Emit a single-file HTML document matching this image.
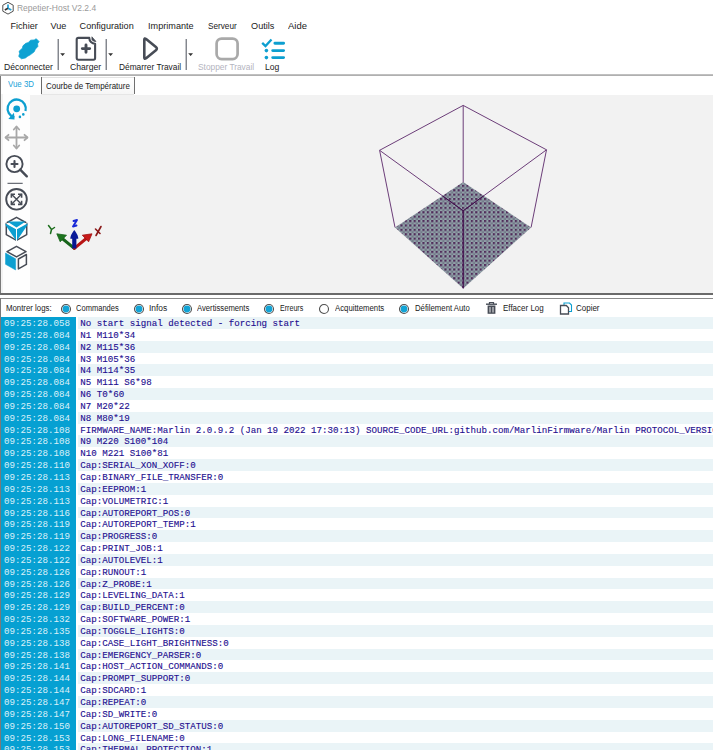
<!DOCTYPE html>
<html><head><meta charset="utf-8"><style>
html,body{margin:0;padding:0;}
body{width:713px;height:750px;overflow:hidden;position:relative;background:#fff;font-family:"Liberation Sans",sans-serif;}
.ab{position:absolute;}
.t{position:absolute;white-space:pre;line-height:12px;}
#log{position:absolute;left:1px;top:317px;width:712px;}
.r{position:relative;height:11.85px;white-space:pre;font-family:"Liberation Mono",monospace;font-size:9.16px;line-height:11.85px;}
.r b{position:absolute;left:0;top:0;width:75px;height:100%;background:#06a0d2;color:#dcf1f9;font-weight:normal;padding-left:3px;padding-top:1px;box-sizing:border-box;}
.r i{position:absolute;left:77px;top:0;right:0;height:100%;font-style:normal;color:#1e0f90;-webkit-text-stroke:0.12px #1e0f90;padding-left:2.3px;padding-top:1px;box-sizing:border-box;}
.r.a i{background:#eaf4f7;}
</style></head><body>
<svg class="ab" style="left:1px;top:1px" width="14" height="14" viewBox="0 0 14 14">
<polygon points="7,1.3 12.2,4.2 12.2,10.2 7,13.1 1.8,10.2 1.8,4.2" fill="none" stroke="#505050" stroke-width="1"/>
<path d="M7,7.2 L7,3.6" stroke="#2aa3d6" stroke-width="1.8"/>
<path d="M7,7.2 L10.3,9" stroke="#2aa3d6" stroke-width="1.8"/>
<path d="M7,7.2 L3.8,9" stroke="#333" stroke-width="1.6"/>
</svg><div class="t" style="left:17.00px;top:2.20px;font-size:9.8px;color:#9a9a9a;transform:scaleX(0.865);transform-origin:0 0;">Repetier-Host V2.2.4</div><div class="t" style="left:10.50px;top:19.95px;font-size:9.1px;color:#1a1a1a;">Fichier</div><div class="t" style="left:50.50px;top:19.95px;font-size:9.1px;color:#1a1a1a;">Vue</div><div class="t" style="left:79.60px;top:19.95px;font-size:9.1px;color:#1a1a1a;">Configuration</div><div class="t" style="left:148.10px;top:19.95px;font-size:9.1px;color:#1a1a1a;">Imprimante</div><div class="t" style="left:208.00px;top:19.95px;font-size:9.1px;color:#1a1a1a;transform:scaleX(0.9);transform-origin:0 0;">Serveur</div><div class="t" style="left:251.10px;top:19.95px;font-size:9.1px;color:#1a1a1a;">Outils</div><div class="t" style="left:287.70px;top:19.95px;font-size:9.1px;color:#1a1a1a;transform:scaleX(1.04);transform-origin:0 0;">Aide</div><div class="t" style="left:3.80px;top:60.52px;font-size:8.9px;color:#1a1a1a;transform:scaleX(0.97);transform-origin:0 0;">Déconnecter</div><div class="t" style="left:70.20px;top:60.52px;font-size:8.9px;color:#1a1a1a;transform:scaleX(0.97);transform-origin:0 0;">Charger</div><div class="t" style="left:118.70px;top:60.52px;font-size:8.9px;color:#1a1a1a;transform:scaleX(0.94);transform-origin:0 0;">Démarrer Travail</div><div class="t" style="left:198.30px;top:60.52px;font-size:8.9px;color:#b4b4c0;transform:scaleX(0.94);transform-origin:0 0;">Stopper Travail</div><div class="t" style="left:265.00px;top:60.52px;font-size:8.9px;color:#1a1a1a;transform:scaleX(0.97);transform-origin:0 0;">Log</div><div class="ab" style="left:57px;top:39px;width:2px;height:31px;background:linear-gradient(to right,#c4c6ca 50%,#84878e 50%)"></div><svg class="ab" style="left:60.0px;top:52.8px" width="6" height="4"><polygon points="0.2,0.2 5,0.2 2.6,3" fill="#333"/></svg><div class="ab" style="left:105px;top:39px;width:2px;height:31px;background:linear-gradient(to right,#c4c6ca 50%,#84878e 50%)"></div><svg class="ab" style="left:108.0px;top:52.8px" width="6" height="4"><polygon points="0.2,0.2 5,0.2 2.6,3" fill="#333"/></svg><div class="ab" style="left:185px;top:39px;width:2px;height:31px;background:linear-gradient(to right,#c4c6ca 50%,#84878e 50%)"></div><svg class="ab" style="left:188.0px;top:52.8px" width="6" height="4"><polygon points="0.2,0.2 5,0.2 2.6,3" fill="#333"/></svg><svg class="ab" style="left:17px;top:37px" width="24" height="23" viewBox="0 0 24 23">
<polygon points="19.24,1.74 21.98,4.47 20.52,6.84 20.88,9.39 18.33,12.13 17.23,14.68 13.59,17.60 10.31,19.42 8.48,20.88 4.47,21.79 1.74,19.42 2.65,16.51 2.10,14.32 5.56,11.04 5.93,8.85 8.85,6.29 11.04,5.75 13.59,3.19 17.23,3.01" fill="#0ea2d2" stroke="#0ea2d2" stroke-width="0.8" stroke-linejoin="round"/>
</svg><svg class="ab" style="left:74px;top:36px" width="24" height="26" viewBox="0 0 24 26">
<path d="M4.3,1.9 H15.3 A5.8,5.8 0 0 0 21.1,7.7 V22.1 Q21.1,23.7 19.5,23.7 H4.3 Q2.7,23.7 2.7,22.1 V3.5 Q2.7,1.9 4.3,1.9 Z" fill="none" stroke="#474c56" stroke-width="2.1" stroke-linejoin="round"/>
<path d="M17.9,0.8 V3.4 Q18.6,5.5 22,5.5 Z" fill="#474c56" stroke="#474c56" stroke-width="0.7" stroke-linejoin="round"/>
<path d="M12,8.9 V16.3 M8.3,12.6 H15.7" stroke="#474c56" stroke-width="2.9" stroke-linecap="round"/>
</svg><svg class="ab" style="left:141px;top:36px" width="20" height="26" viewBox="0 0 20 26">
<path d="M3.3,3.8 Q3.3,1.7 5.1,3 L14.9,10.9 Q16.8,12.6 14.9,14.3 L5.1,22.3 Q3.3,23.6 3.3,21.5 Z" fill="none" stroke="#474c56" stroke-width="2.6" stroke-linejoin="round"/>
</svg><svg class="ab" style="left:214px;top:36px" width="26" height="26" viewBox="0 0 26 26">
<rect x="2.6" y="2.6" width="21" height="20.5" rx="5" fill="none" stroke="#a9a9a9" stroke-width="2.7"/>
</svg><svg class="ab" style="left:260px;top:37px" width="27" height="23" viewBox="0 0 27 23">
<path d="M2.2,5.8 L5.5,9 L11.5,2.5" fill="none" stroke="#0d9fd0" stroke-width="2.3"/>
<path d="M14.9,6.3 H23.6 M12.7,13.6 H23.6 M12.7,20.6 H23.6" stroke="#0d9fd0" stroke-width="2.9" stroke-linecap="round"/>
<circle cx="6.4" cy="13.6" r="1.8" fill="#0d9fd0"/>
<circle cx="6.4" cy="20.6" r="1.8" fill="#0d9fd0"/>
</svg><div class="ab" style="left:0;top:74px;width:713px;height:2px;background:linear-gradient(#c8c8c8,#a8a8a8)"></div><div class="ab" style="left:0;top:76px;width:1px;height:218px;background:#7a7a7a"></div><div class="ab" style="left:41px;top:77px;width:93px;height:16px;border-top:1px solid #e3e3e3;border-bottom:1px solid #e6e6e6;background:linear-gradient(#ffffff,#f6f6f6)"></div><div class="ab" style="left:41px;top:77px;width:1px;height:17px;background:#6a6a6a"></div><div class="ab" style="left:134px;top:77px;width:1px;height:17px;background:#707070"></div><div class="t" style="left:7.90px;top:77.51px;font-size:9.2px;color:#1aa2d8;transform:scaleX(0.86);transform-origin:0 0;">Vue 3D</div><div class="t" style="left:45.50px;top:79.82px;font-size:8.6px;color:#1a1a1a;transform:scaleX(0.925);transform-origin:0 0;">Courbe de Température</div><div class="ab" style="left:1px;top:94px;width:29px;height:199px;background:#fefefe;border-left:2px solid #f3f3f3;box-sizing:border-box"></div><div class="ab" style="left:30px;top:95px;width:683px;height:198px;background:#f2f2f2"></div><div class="ab" style="left:0;top:293px;width:713px;height:2px;background:#6a6a6a"></div><div class="ab" style="left:0;top:298px;width:713px;height:1px;background:#8a8a8a"></div><div class="ab" style="left:0;top:298px;width:1px;height:452px;background:#7a7a7a"></div><svg class="ab" style="left:0;top:94px" width="30" height="180" viewBox="0 0 30 180">
<!-- rotate -->
<path d="M14.35,23.39 A9.1,9.1 0 1 1 25.49,16.96" fill="none" stroke="#0d9fd0" stroke-width="2.3"/>
<polygon points="8.3,25 14.5,25.6 14,18.8" fill="#0d9fd0"/>
<circle cx="16.7" cy="14.8" r="3.4" fill="#0d9fd0"/>
<circle cx="19.9" cy="22.9" r="1.3" fill="#0d9fd0"/>
<circle cx="23.3" cy="20.4" r="1.3" fill="#0d9fd0"/>
<!-- move -->
<g stroke="#a8a8a8" stroke-width="1.8" fill="none" stroke-linecap="round" stroke-linejoin="round">
<path d="M16.5,33 V54 M6,43.5 H27"/>
<path d="M13.8,35.5 L16.5,32.5 L19.2,35.5 M13.8,51.5 L16.5,54.5 L19.2,51.5 M8.5,40.8 L5.5,43.5 L8.5,46.2 M24.5,40.8 L27.5,43.5 L24.5,46.2"/>
</g>
<!-- zoom -->
<g stroke="#474c56" fill="none" stroke-linecap="round">
<circle cx="14.5" cy="70" r="8.1" stroke-width="1.9"/>
<path d="M20.2,75.7 L26.8,82.3" stroke-width="2.4"/>
<path d="M14.5,67 V73 M11.5,70 H17.5" stroke-width="2.1"/>
</g>
<path d="M7.5,89.3 H22.7" stroke="#474c56" stroke-width="1"/>
<!-- fit -->
<g stroke="#474c56" fill="none">
<circle cx="16.5" cy="105.3" r="10.3" stroke-width="1.9"/>
<path d="M11.3,100.1 L21.7,110.5 M21.7,100.1 L11.3,110.5" stroke-width="1.4"/>
<path d="M11.4,103.8 V100.2 H15 M21.6,103.8 V100.2 H18 M11.4,106.8 V110.4 H15 M21.6,106.8 V110.4 H18" stroke-width="1.6" stroke-linejoin="miter"/>
</g>
<!-- cube 1 -->
<g fill="none" stroke="#474c56" stroke-width="1.5" stroke-linejoin="round">
<polygon points="16.5,123.3 26.7,129 26.7,140.6 16.5,146.3 6.3,140.6 6.3,129"/>
</g>
<polygon points="7.3,127.5 25.7,127.5 16.5,133.4" fill="#0d9fd0"/>
<polygon points="5.5,129.4 16.5,135.6 16.5,147.2 5.5,131" fill="#0d9fd0"/>
<polygon points="27.5,129.4 16.5,135.6 16.5,147.2 27.5,131" fill="#0d9fd0"/>
<path d="M5.3,128.3 L16.5,134.5 L27.7,128.3 M16.5,134.5 V147.5" fill="none" stroke="#fefefe" stroke-width="1"/>
<!-- cube 2 -->
<polygon points="5.5,159 15.6,164.8 15.6,176 5.5,170.3" fill="#0d9fd0" stroke="#0d9fd0" stroke-width="0.5" stroke-linejoin="round"/>
<g fill="none" stroke="#474c56" stroke-width="1.5" stroke-linejoin="round">
<polygon points="16.5,152.3 26,157.6 16.5,162.9 7,157.6"/>
<polygon points="18.4,165 26.4,160.5 26.4,170.4 18.4,174.9"/>
</g>
</svg><svg class="ab" style="left:40px;top:210px" width="70" height="45" viewBox="0 0 70 45">
<path d="M34.3,38.3 L21,27.5" stroke="#17641a" stroke-width="3.0" stroke-linecap="round"/>
<polygon points="16.8,23.8 26.5,25.2 20.2,31.8" fill="#1d741f" stroke="#17641a" stroke-width="0.8" stroke-linejoin="round"/>
<path d="M34.3,38.3 L47.5,27.5" stroke="#b81414" stroke-width="3.0" stroke-linecap="round"/>
<polygon points="52,23.8 42.3,25.2 48.6,31.8" fill="#c81a1a" stroke="#a01010" stroke-width="0.8" stroke-linejoin="round"/>
<path d="M34.3,38.5 V26" stroke="#081690" stroke-width="4.2"/>
<path d="M30.3,28.8 Q30.3,25 34.3,20 Q38.3,25 38.3,28.8 Z" fill="#0a1a98"/>
<path d="M8.5,15.5 L11.5,19.5 L14.5,17.5 M11.5,19.5 L10.5,23.5" fill="none" stroke="#1d6e1d" stroke-width="1.5" stroke-linecap="round"/>
<path d="M33.5,11 L37,10 L33,16.5 L36.5,15.5" fill="none" stroke="#1a2ad8" stroke-width="1.9" stroke-linejoin="round" stroke-linecap="round"/>
<path d="M61,16.5 L56,25.5 M55.5,19 L60,23.5" fill="none" stroke="#8a1818" stroke-width="1.6" stroke-linecap="round"/>
</svg><svg class="ab" style="left:0;top:0" width="713" height="300" viewBox="0 0 713 300">
<defs>
<pattern id="grid" width="4.4" height="4.4" patternUnits="userSpaceOnUse">
<rect width="4.4" height="4.4" fill="#93a4aa"/>
<rect width="2.2" height="2.2" fill="#502c5a"/>
<rect x="2.2" y="2.2" width="2.2" height="2.2" fill="#747a8a"/>
</pattern>
</defs>
<clipPath id="bedclip"><polygon points="463.2,182 531.1,227.4 463.2,288.6 395,227.4"/></clipPath>
<polygon points="463.2,182 531.1,227.4 463.2,288.6 395,227.4" fill="url(#grid)"/>
<g stroke="#643472" stroke-width="0.95" fill="none">
<polygon points="463.2,105.4 546.5,149.8 463.2,210.8 379.6,150.3"/>
<path d="M463.2,105.4 V182 M379.6,150.3 L395,227.4 M546.5,149.8 L531.1,227.4 M463.2,210.8 V288.6"/>
</g>
<g stroke="#3e0e48" stroke-width="1" fill="none" clip-path="url(#bedclip)">
<path d="M379.6,150.3 L463.2,210.8 L546.5,149.8 M463.2,210.8 V288.6"/>
</g>
</svg><div class="t" style="left:5.80px;top:301.62px;font-size:8.9px;color:#1a1a1a;transform:scaleX(0.88);transform-origin:0 0;">Montrer logs:</div><svg class="ab" style="left:59.5px;top:302.7px" width="12" height="12"><circle cx="6" cy="6" r="4.5" fill="#fff" stroke="#505050" stroke-width="1.1"/><circle cx="6" cy="6" r="3.4" fill="#12a4d6"/></svg><div class="t" style="left:75.50px;top:301.62px;font-size:8.9px;color:#1a1a1a;transform:scaleX(0.85);transform-origin:0 0;">Commandes</div><svg class="ab" style="left:133.2px;top:302.7px" width="12" height="12"><circle cx="6" cy="6" r="4.5" fill="#fff" stroke="#505050" stroke-width="1.1"/><circle cx="6" cy="6" r="3.4" fill="#12a4d6"/></svg><div class="t" style="left:148.70px;top:301.62px;font-size:8.9px;color:#1a1a1a;transform:scaleX(0.95);transform-origin:0 0;">Infos</div><svg class="ab" style="left:180.6px;top:302.7px" width="12" height="12"><circle cx="6" cy="6" r="4.5" fill="#fff" stroke="#505050" stroke-width="1.1"/><circle cx="6" cy="6" r="3.4" fill="#12a4d6"/></svg><div class="t" style="left:196.70px;top:301.62px;font-size:8.9px;color:#1a1a1a;transform:scaleX(0.865);transform-origin:0 0;">Avertissements</div><svg class="ab" style="left:263.4px;top:302.7px" width="12" height="12"><circle cx="6" cy="6" r="4.5" fill="#fff" stroke="#505050" stroke-width="1.1"/><circle cx="6" cy="6" r="3.4" fill="#12a4d6"/></svg><div class="t" style="left:279.50px;top:301.62px;font-size:8.9px;color:#1a1a1a;transform:scaleX(0.8);transform-origin:0 0;">Erreurs</div><svg class="ab" style="left:317.9px;top:302.7px" width="12" height="12"><circle cx="6" cy="6" r="4.5" fill="#fff" stroke="#505050" stroke-width="1.1"/></svg><div class="t" style="left:334.50px;top:301.62px;font-size:8.9px;color:#1a1a1a;transform:scaleX(0.875);transform-origin:0 0;">Acquittements</div><svg class="ab" style="left:398.4px;top:302.7px" width="12" height="12"><circle cx="6" cy="6" r="4.5" fill="#fff" stroke="#505050" stroke-width="1.1"/><circle cx="6" cy="6" r="3.4" fill="#12a4d6"/></svg><div class="t" style="left:414.50px;top:301.62px;font-size:8.9px;color:#1a1a1a;transform:scaleX(0.875);transform-origin:0 0;">Défilement Auto</div><svg class="ab" style="left:485px;top:301px" width="13" height="14" viewBox="0 0 13 14">
<path d="M1,3.2 H12" stroke="#474c56" stroke-width="1.4"/>
<path d="M4.5,3 V1.5 H8.5 V3" fill="none" stroke="#474c56" stroke-width="1.2"/>
<path d="M2.6,4.5 H10.4 V12.8 H2.6 Z" fill="#474c56"/>
<path d="M5,6 V11.5 M8,6 V11.5" stroke="#fff" stroke-width="0.9"/>
</svg><div class="t" style="left:503.30px;top:301.62px;font-size:8.9px;color:#1a1a1a;transform:scaleX(0.9);transform-origin:0 0;">Effacer Log</div><svg class="ab" style="left:559px;top:301px" width="14" height="14" viewBox="0 0 14 14">
<path d="M5,2 H10.5 L12.5,4 V10.5 H5 Z" fill="#fff" stroke="#0d9fd0" stroke-width="1.1"/>
<path d="M1.5,4.5 H7.3 L9.5,6.7 V13 H1.5 Z" fill="#fff" stroke="#474c56" stroke-width="1.3"/>
</svg><div class="t" style="left:576.30px;top:301.62px;font-size:8.9px;color:#1a1a1a;transform:scaleX(0.9);transform-origin:0 0;">Copier</div><div id="log"><div class="r a"><b>09:25:28.058</b><i>No start signal detected - forcing start</i></div><div class="r"><b>09:25:28.084</b><i>N1 M110*34</i></div><div class="r a"><b>09:25:28.084</b><i>N2 M115*36</i></div><div class="r"><b>09:25:28.084</b><i>N3 M105*36</i></div><div class="r a"><b>09:25:28.084</b><i>N4 M114*35</i></div><div class="r"><b>09:25:28.084</b><i>N5 M111 S6*98</i></div><div class="r a"><b>09:25:28.084</b><i>N6 T0*60</i></div><div class="r"><b>09:25:28.084</b><i>N7 M20*22</i></div><div class="r a"><b>09:25:28.084</b><i>N8 M80*19</i></div><div class="r"><b>09:25:28.108</b><i>FIRMWARE_NAME:Marlin 2.0.9.2 (Jan 19 2022 17:30:13) SOURCE_CODE_URL:github.com/MarlinFirmware/Marlin PROTOCOL_VERSION:1.0 MACHINE_TYPE:3D Printer</i></div><div class="r a"><b>09:25:28.108</b><i>N9 M220 S100*104</i></div><div class="r"><b>09:25:28.108</b><i>N10 M221 S100*81</i></div><div class="r a"><b>09:25:28.110</b><i>Cap:SERIAL_XON_XOFF:0</i></div><div class="r"><b>09:25:28.113</b><i>Cap:BINARY_FILE_TRANSFER:0</i></div><div class="r a"><b>09:25:28.113</b><i>Cap:EEPROM:1</i></div><div class="r"><b>09:25:28.113</b><i>Cap:VOLUMETRIC:1</i></div><div class="r a"><b>09:25:28.116</b><i>Cap:AUTOREPORT_POS:0</i></div><div class="r"><b>09:25:28.119</b><i>Cap:AUTOREPORT_TEMP:1</i></div><div class="r a"><b>09:25:28.119</b><i>Cap:PROGRESS:0</i></div><div class="r"><b>09:25:28.122</b><i>Cap:PRINT_JOB:1</i></div><div class="r a"><b>09:25:28.122</b><i>Cap:AUTOLEVEL:1</i></div><div class="r"><b>09:25:28.126</b><i>Cap:RUNOUT:1</i></div><div class="r a"><b>09:25:28.126</b><i>Cap:Z_PROBE:1</i></div><div class="r"><b>09:25:28.129</b><i>Cap:LEVELING_DATA:1</i></div><div class="r a"><b>09:25:28.129</b><i>Cap:BUILD_PERCENT:0</i></div><div class="r"><b>09:25:28.132</b><i>Cap:SOFTWARE_POWER:1</i></div><div class="r a"><b>09:25:28.135</b><i>Cap:TOGGLE_LIGHTS:0</i></div><div class="r"><b>09:25:28.138</b><i>Cap:CASE_LIGHT_BRIGHTNESS:0</i></div><div class="r a"><b>09:25:28.138</b><i>Cap:EMERGENCY_PARSER:0</i></div><div class="r"><b>09:25:28.141</b><i>Cap:HOST_ACTION_COMMANDS:0</i></div><div class="r a"><b>09:25:28.144</b><i>Cap:PROMPT_SUPPORT:0</i></div><div class="r"><b>09:25:28.144</b><i>Cap:SDCARD:1</i></div><div class="r a"><b>09:25:28.147</b><i>Cap:REPEAT:0</i></div><div class="r"><b>09:25:28.147</b><i>Cap:SD_WRITE:0</i></div><div class="r a"><b>09:25:28.150</b><i>Cap:AUTOREPORT_SD_STATUS:0</i></div><div class="r"><b>09:25:28.153</b><i>Cap:LONG_FILENAME:0</i></div><div class="r a"><b>09:25:28.153</b><i>Cap:THERMAL_PROTECTION:1</i></div></div>
</body></html>
